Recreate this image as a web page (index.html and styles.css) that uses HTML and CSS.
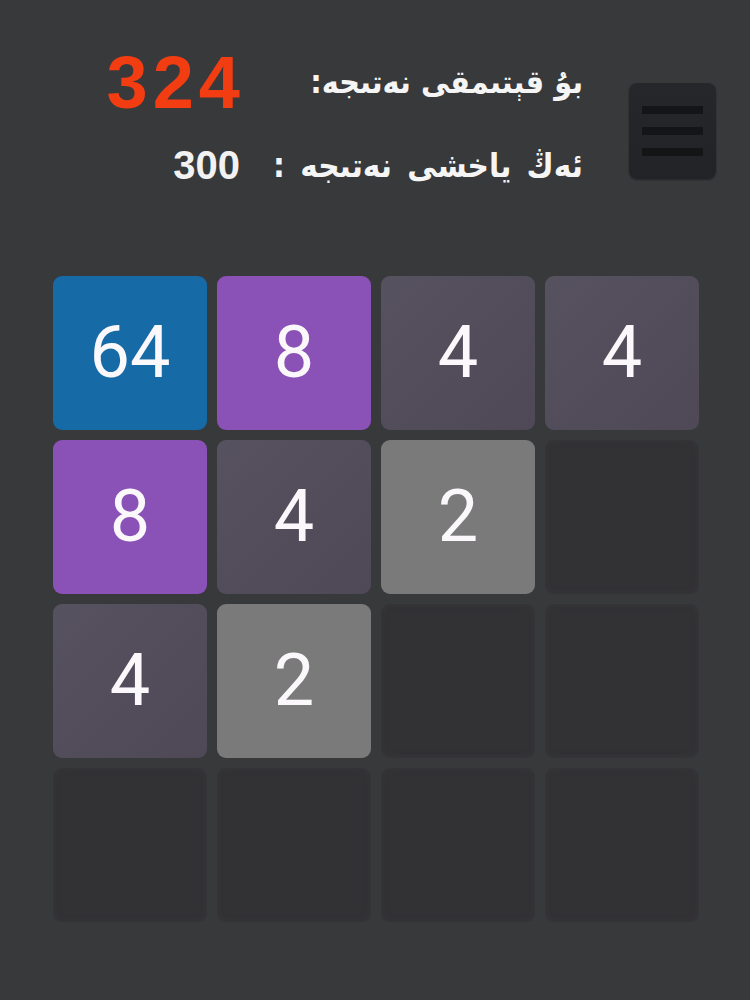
FILE: index.html
```html
<!DOCTYPE html>
<html lang="ug">
<head>
<meta charset="utf-8">
<title>2048</title>
<link rel="stylesheet" href="styles.css">
</head>
<body>
<div class="page">
  <header class="header">
    <div class="scores">
      <div class="score-row current">
        <span class="value red">324</span>
        <span class="label" dir="rtl">بۇ قېتىمقى نەتىجە:</span>
      </div>
      <div class="score-row best">
        <span class="value">300</span>
        <span class="label" dir="rtl">ئەڭ ياخشى نەتىجە :</span>
      </div>
    </div>
    <button class="menu" aria-label="menu">
      <span class="bar"></span>
      <span class="bar"></span>
      <span class="bar"></span>
    </button>
  </header>

  <main class="board">
    <div class="cell t64">64</div>
    <div class="cell t8">8</div>
    <div class="cell t4">4</div>
    <div class="cell t4">4</div>

    <div class="cell t8">8</div>
    <div class="cell t4">4</div>
    <div class="cell t2">2</div>
    <div class="cell empty"></div>

    <div class="cell t4">4</div>
    <div class="cell t2">2</div>
    <div class="cell empty"></div>
    <div class="cell empty"></div>

    <div class="cell empty"></div>
    <div class="cell empty"></div>
    <div class="cell empty"></div>
    <div class="cell empty"></div>
  </main>
</div>
</body>
</html>
```

FILE: styles.css
```css
html, body {
  margin: 0;
  padding: 0;
  background: #37393b;
}

body {
  width: 750px;
  height: 1000px;
  overflow: hidden;
  font-family: "Liberation Sans", Arial, sans-serif;
  color: #ffffff;
}

.page {
  display: flex;
  flex-direction: column;
}

.header {
  display: flex;
  align-items: flex-start;
  padding: 47px 34px 0 95px;
}

.scores {
  display: flex;
  flex-direction: column;
  gap: 13px;
  width: 488px;
}

.score-row {
  display: flex;
  align-items: center;
  height: 70px;
}

.value {
  width: 145px;
  text-align: right;
  font-family: "Liberation Sans", Arial, sans-serif;
  font-weight: bold;
  color: #f2f2f2;
}

.current .value {
  font-size: 74px;
  letter-spacing: 5px;
  margin-right: -5px;
  width: 150px;
}

.best .value {
  font-size: 40px;
}

.red {
  color: #f23c12;
}

.label {
  flex: 1;
  text-align: start;
  font-family: "DejaVu Sans Condensed", "DejaVu Sans", sans-serif;
  font-stretch: condensed;
  font-weight: bold;
  font-size: 33px;
  color: #f5f5f5;
  white-space: nowrap;
}

.current .label {
  font-size: 32px;
}

.best .label {
  word-spacing: 5px;
}

.menu {
  margin-left: 46px;
  margin-top: 36px;
  width: 87px;
  height: 96px;
  border: none;
  border-radius: 8px;
  background: linear-gradient(180deg, #26272a 0%, #222326 100%);
  box-shadow: 0 1px 2px rgba(0, 0, 0, 0.35);
  display: flex;
  flex-direction: column;
  align-items: center;
  gap: 13px;
  padding: 23px 0 0 0;
}

.menu .bar {
  display: block;
  width: 61px;
  height: 8px;
  background: #141517;
}

.board {
  margin: 76px 0 0 53px;
  display: grid;
  grid-template-columns: repeat(4, 154px);
  grid-auto-rows: 154px;
  gap: 10px;
}

.cell {
  border-radius: 9px;
  display: flex;
  align-items: center;
  justify-content: center;
  font-family: Roboto, "Liberation Sans", sans-serif;
  font-size: 72px;
  color: #fbf8fb;
  line-height: 1;
}

.t64 {
  background: #166aa6;
}

.t8 {
  background: #8a51b6;
}

.t4 {
  background: linear-gradient(135deg, #57525f 0%, #4e4857 100%);
}

.t2 {
  background: #7a7a7b;
}

.empty {
  background: #323235;
  box-shadow: inset 0 0 6px rgba(60, 60, 64, 0.6);
}
```
